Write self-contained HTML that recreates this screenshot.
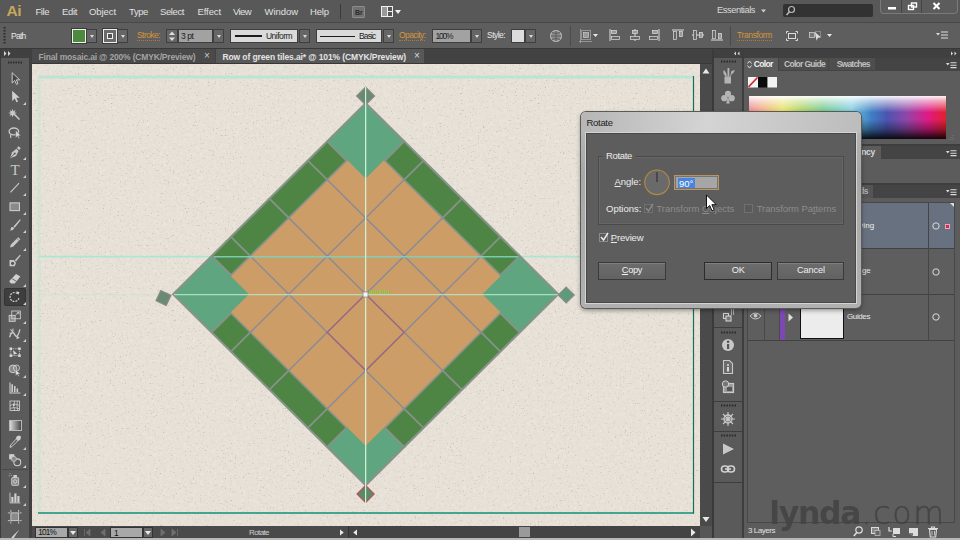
<!DOCTYPE html>
<html><head><meta charset="utf-8"><title>Row of green tiles.ai</title>
<style>
*{box-sizing:border-box;margin:0;padding:0}
html,body{width:960px;height:540px;overflow:hidden;background:#5b5b5b;font-family:"Liberation Sans",sans-serif;font-size:9px;color:#e0e0e0}
.a{position:absolute}
.t{position:absolute;white-space:nowrap;line-height:1}
.m{top:6px;font-size:10.5px;color:#dedede}
.or{color:#d4963a;border-bottom:1px dotted #b07a30}
.dd{position:absolute;top:29px;height:14px;width:11px;background:#666;border:1px solid #3e3e3e}
.dd:after{content:"";position:absolute;left:2px;top:5px;border:2.5px solid transparent;border-top:3.5px solid #d8d8d8;border-bottom:0;margin-left:.5px}
.btn{position:absolute;height:18px;background:linear-gradient(#6c6c6c,#626262);border:1px solid #3a3a3a;box-shadow:inset 0 1px 0 #808080;color:#f0f0f0;font-size:10px;text-align:center;line-height:16px}
</style></head><body>
<div class="a" style="left:0px;top:0px;width:960px;height:22px;background:#585858;"></div>
<div class="a" style="left:0px;top:22px;width:960px;height:1px;background:#484848;"></div>
<div class="t " style="left:6.5px;top:2.5px;font-size:15.5px;color:#c6a75c;font-weight:bold;letter-spacing:-0.5px;">Ai</div>
<div class="t " style="left:35.5px;top:6.5px;font-size:9.5px;color:#e0e0e0;;letter-spacing:-0.45px">File</div>
<div class="t " style="left:62px;top:6.5px;font-size:9.5px;color:#e0e0e0;;letter-spacing:-0.34px">Edit</div>
<div class="t " style="left:89px;top:6.5px;font-size:9.5px;color:#e0e0e0;;letter-spacing:-0.08px">Object</div>
<div class="t " style="left:129px;top:6.5px;font-size:9.5px;color:#e0e0e0;;letter-spacing:-0.40px">Type</div>
<div class="t " style="left:160px;top:6.5px;font-size:9.5px;color:#e0e0e0;;letter-spacing:-0.40px">Select</div>
<div class="t " style="left:197.5px;top:6.5px;font-size:9.5px;color:#e0e0e0;;letter-spacing:-0.10px">Effect</div>
<div class="t " style="left:233px;top:6.5px;font-size:9.5px;color:#e0e0e0;;letter-spacing:-0.61px">View</div>
<div class="t " style="left:264.5px;top:6.5px;font-size:9.5px;color:#e0e0e0;;letter-spacing:-0.05px">Window</div>
<div class="t " style="left:310px;top:6.5px;font-size:9.5px;color:#e0e0e0;;letter-spacing:-0.14px">Help</div>
<div class="a" style="left:340px;top:4px;width:1px;height:15px;background:#3a3a3a;"></div>
<div class="a" style="left:352px;top:6px;width:13px;height:12px;background:#707070;border:1px solid #8c8c8c;border-radius:1px"><div class="t" style="left:2px;top:2px;font-size:7px;color:#2a2a2a;font-weight:bold">Br</div></div>
<svg class="a" style="left:381px;top:6px" width="22" height="12"><rect x="0.5" y="0.5" width="11" height="10" fill="#555" stroke="#f0f0f0"/><path d="M6.5 0.5v10M6.5 5.5h5" stroke="#f0f0f0" fill="none"/><rect x="1" y="1" width="5" height="9" fill="#999"/><path d="M14 4h6l-3 4z" fill="#f0f0f0"/></svg>
<div class="t " style="left:717px;top:6px;font-size:9.3px;color:#d8d8d8;;letter-spacing:-0.44px">Essentials</div>
<svg class="a" style="left:761px;top:9px" width="6" height="5"><path d="M0 0.5h5l-2.5 3z" fill="#d0d0d0"/></svg>
<div class="a" style="left:783px;top:4px;width:90px;height:13px;background:#323232;border-radius:2px"></div>
<svg class="a" style="left:785px;top:5px" width="12" height="12"><circle cx="6.5" cy="4.5" r="3" fill="none" stroke="#bbb" stroke-width="1.2"/><path d="M4.5 6.8L1.5 10" stroke="#bbb" stroke-width="1.6"/></svg>
<div class="a" style="left:880px;top:0px;width:78px;height:14px;background:#5c5c5c;border:1px solid #7a7a7a;border-top:0;border-radius:0 0 4px 4px"></div>
<div class="a" style="left:901px;top:0px;width:1px;height:13px;background:#444;"></div>
<div class="a" style="left:921px;top:0px;width:1px;height:13px;background:#444;"></div>
<svg class="a" style="left:880px;top:0" width="78" height="14"><rect x="8" y="7" width="8" height="2.5" fill="#fff"/><rect x="28.5" y="5.500" width="5" height="4" fill="none" stroke="#fff" stroke-width="1.4"/><rect x="31.5" y="3" width="5" height="4" fill="none" stroke="#fff" stroke-width="1.4"/><path d="M53.500 3l6 6M59.500 3l-6 6" stroke="#fff" stroke-width="2"/></svg>
<div class="a" style="left:0px;top:23px;width:960px;height:25px;background:#5e5e5e;"></div>
<div class="a" style="left:0px;top:48px;width:960px;height:1px;background:#383838;"></div>
<svg class="a" style="left:3px;top:27px" width="4" height="18"><path d="M1.5 0v18" stroke="#2a2a2a" stroke-width="2" stroke-dasharray="1.5 1.5"/></svg>
<div class="t " style="left:11px;top:32px;font-size:8.5px;color:#e8e8e8;;letter-spacing:-0.75px">Path</div>
<div class="a" style="left:72px;top:29px;width:14px;height:14px;background:#4d8a3e;border:1px solid #f0f0f0;outline:1px solid #3a3a3a"></div>
<div class="dd" style="left:86px"></div><div class="a" style="left:103px;top:29px;width:14px;height:14px;background:#6a6a6a;border:1px solid #f0f0f0;outline:1px solid #3a3a3a"><div class="a" style="left:3px;top:3px;width:6px;height:6px;border:1.5px solid #f0f0f0;background:#555"></div></div>
<div class="dd" style="left:117px"></div><div class="t or" style="left:137px;top:31px;font-size:8.5px;color:#d4963a;;letter-spacing:-0.56px">Stroke:</div>
<div class="a" style="left:166px;top:29px;width:12px;height:14px;background:#666;border:1px solid #3e3e3e"></div>
<svg class="a" style="left:166px;top:29px" width="12" height="14"><path d="M3 6l3-3.500 3 3.500zM3 8.500l3 3.500 3-3.500z" fill="#ddd"/></svg>
<div class="a" style="left:178px;top:29px;width:35px;height:14px;background:#a2a2a2;border:1px solid #3e3e3e"></div>
<div class="t " style="left:181px;top:32px;font-size:8.5px;color:#1e1e1e;;letter-spacing:-0.42px">3 pt</div>
<div class="dd" style="left:213px"></div><div class="a" style="left:230px;top:29px;width:68px;height:14px;background:#dadada;border:1px solid #3e3e3e"><div class="a" style="left:3.500px;top:5px;width:27px;height:2px;background:#1a1a1a"></div></div>
<div class="t " style="left:266px;top:32px;font-size:8.5px;color:#1e1e1e;;letter-spacing:-0.54px">Uniform</div>
<div class="dd" style="left:299px"></div><div class="a" style="left:316px;top:29px;width:66px;height:14px;background:#dadada;border:1px solid #3e3e3e"><div class="a" style="left:3px;top:5.500px;width:35px;height:1.5px;background:#1a1a1a"></div></div>
<div class="t " style="left:359px;top:32px;font-size:8.5px;color:#1e1e1e;;letter-spacing:-0.86px">Basic</div>
<div class="dd" style="left:383px"></div><div class="t or" style="left:399px;top:31px;font-size:8.5px;color:#d4963a;;letter-spacing:-0.59px">Opacity:</div>
<div class="a" style="left:432px;top:29px;width:39px;height:14px;background:#a2a2a2;border:1px solid #3e3e3e"></div>
<div class="t " style="left:435.4px;top:32px;font-size:8.5px;color:#1e1e1e;;letter-spacing:-1.19px">100%</div>
<div class="dd" style="left:471px"></div><div class="t " style="left:487px;top:31px;font-size:8.5px;color:#e8e8e8;;letter-spacing:-0.54px">Style:</div>
<div class="a" style="left:511px;top:29px;width:14px;height:14px;background:#dcdcdc;border:1px solid #3e3e3e"></div>
<div class="dd" style="left:525px"></div><svg class="a" style="left:549px;top:29px" width="14" height="14"><circle cx="7" cy="7" r="5.500" fill="#8a8a8a" stroke="#c8c8c8"/><path d="M7 1.500v11M1.500 7h11M3 3.500q4 2 8 0M3 10.500q4-2 8 0" stroke="#555" fill="none" stroke-width=".8"/></svg>
<div class="a" style="left:570px;top:26px;width:1px;height:20px;background:#4c4c4c;"></div>
<svg class="a" style="left:579px;top:29px" width="20" height="14"><rect x="2.500" y="1.500" width="9" height="9" fill="none" stroke="#ccc" stroke-dasharray="1 1"/><rect x="4.500" y="3.500" width="5" height="5" fill="#999" stroke="#ddd" stroke-width=".6"/><path d="M0 12.500h13M1.500 0v14" stroke="#bbb" stroke-width=".6"/><path d="M14 5h5l-2.500 3z" fill="#e8e8e8"/></svg>
<svg class="a" style="left:609px;top:29px" width="12" height="12"><path d="M1 0v12" stroke="#ddd"/><rect x="2.500" y="1.500" width="5" height="3" fill="#999" stroke="#ddd" stroke-width=".7"/><rect x="2.500" y="7.500" width="8" height="3" fill="#666" stroke="#ddd" stroke-width=".7"/></svg>
<svg class="a" style="left:629px;top:29px" width="12" height="12"><path d="M6 0v12" stroke="#ddd"/><rect x="3.500" y="1.500" width="5" height="3" fill="#999" stroke="#ddd" stroke-width=".7"/><rect x="1.500" y="7.500" width="9" height="3" fill="#666" stroke="#ddd" stroke-width=".7"/></svg>
<svg class="a" style="left:648px;top:29px" width="12" height="12"><path d="M11 0v12" stroke="#ddd"/><rect x="4.500" y="1.500" width="5" height="3" fill="#999" stroke="#ddd" stroke-width=".7"/><rect x="1.500" y="7.500" width="8" height="3" fill="#666" stroke="#ddd" stroke-width=".7"/></svg>
<svg class="a" style="left:672px;top:29px" width="12" height="12"><path d="M0 1h12" stroke="#ddd"/><rect x="1.500" y="2.500" width="3" height="8" fill="#666" stroke="#ddd" stroke-width=".7"/><rect x="7.500" y="2.500" width="3" height="5" fill="#999" stroke="#ddd" stroke-width=".7"/></svg>
<svg class="a" style="left:692px;top:29px" width="12" height="12"><path d="M0 6h12" stroke="#ddd"/><rect x="1.500" y="1.500" width="3" height="9" fill="#666" stroke="#ddd" stroke-width=".7"/><rect x="7.500" y="3.500" width="3" height="5" fill="#999" stroke="#ddd" stroke-width=".7"/></svg>
<svg class="a" style="left:711px;top:29px" width="12" height="12"><path d="M0 11h12" stroke="#ddd"/><rect x="1.500" y="1.500" width="3" height="8" fill="#666" stroke="#ddd" stroke-width=".7"/><rect x="7.500" y="4.500" width="3" height="5" fill="#999" stroke="#ddd" stroke-width=".7"/></svg>
<div class="a" style="left:730px;top:26px;width:1px;height:20px;background:#4a4a4a;"></div>
<div class="t or" style="left:737px;top:31px;font-size:8.5px;color:#d4963a;;letter-spacing:-0.38px">Transform</div>
<svg class="a" style="left:786px;top:30px" width="12" height="12"><rect x="2.500" y="3.500" width="7" height="5" fill="none" stroke="#ddd"/><path d="M0.500 3.500v-2h2M11.500 3.500v-2h-2M0.500 8.500v2h2M11.500 8.500v2h-2" stroke="#ddd" fill="none"/></svg>
<svg class="a" style="left:808px;top:29px" width="26" height="14"><rect x="1.500" y="3.500" width="5" height="5" fill="#777" stroke="#ccc" stroke-width=".8"/><rect x="7.500" y="2.500" width="5" height="5" fill="none" stroke="#ccc" stroke-dasharray="1 1" stroke-width=".8"/><path d="M7 3l6 5.500-3 .2-1.500 3z" fill="#ddd"/><path d="M19 5h5l-2.500 3z" fill="#e8e8e8"/></svg>
<svg class="a" style="left:936px;top:31px" width="14" height="9"><path d="M0 2h4l-2 2.500z" fill="#ddd"/><path d="M5 1h7M5 4h7M5 7h7" stroke="#ddd" stroke-width="1.2"/></svg>
<div class="a" style="left:0px;top:49px;width:30px;height:9px;background:#404040;"></div>
<svg class="a" style="left:4px;top:51px" width="8" height="5"><path d="M0 0l2.500 2.500-2.500 2.500zM4 0l2.500 2.500-2.500 2.500z" fill="#d8d8d8"/></svg>
<div class="a" style="left:29px;top:49px;width:3px;height:491px;background:#404040;"></div>
<div class="a" style="left:32px;top:49px;width:680px;height:15px;background:#424242;"></div>
<div class="a" style="left:32px;top:49px;width:183px;height:14px;background:#4a4a4a;"></div>
<div class="t " style="left:38.5px;top:52.6px;font-size:8.5px;color:#a4a4a4;font-weight:bold;letter-spacing:-0.17px">Final mosaic.ai @ 200% (CMYK/Preview)</div>
<div class="t " style="left:204px;top:51px;font-size:10px;color:#c8c8c8;;">×</div>
<div class="a" style="left:216px;top:49px;width:208px;height:15px;background:#585858;"></div>
<div class="t " style="left:222.5px;top:52.6px;font-size:8.5px;color:#e4e4e4;font-weight:bold;letter-spacing:-0.11px">Row of green tiles.ai* @ 101% (CMYK/Preview)</div>
<div class="t " style="left:414px;top:51px;font-size:10px;color:#d8d8d8;;">×</div>
<div class="a" style="left:32px;top:63px;width:680px;height:1px;background:#383838;"></div>
<div class="a" style="left:0px;top:58px;width:29px;height:482px;background:#5b5b5b;"></div>
<div class="a" style="left:0px;top:49px;width:1px;height:491px;background:#3c3c3c;"></div>
<svg class="a" style="left:8px;top:60.500px" width="14" height="3"><path d="M0 1.500h14" stroke="#2e2e2e" stroke-width="2" stroke-dasharray="1.500 1"/></svg>
<div class="a" style="left:4px;top:288px;width:22px;height:17.5px;background:#3e3e3e;border:1px solid #343434;border-radius:2px"></div>
<div class="a" style="left:2px;top:469px;width:26px;height:1px;background:#4a4a4a;"></div>
<svg class="a" style="left:7.3px;top:71.3px" width="15.5" height="15.5" viewBox="0 0 18 18"><path d="M6 2v12l3-3 2 4.500 1.800-.8-2-4.400h4z" fill="#444" stroke="#d0d0d0" stroke-width="1.100"/></svg>
<svg class="a" style="left:7.3px;top:89.3px" width="15.5" height="15.5" viewBox="0 0 18 18"><path d="M6 2v12l3-3 2 4.500 1.800-.8-2-4.400h4z" fill="#d0d0d0"/></svg>
<svg class="a" style="left:23px;top:102px" width="3" height="3"><path d="M3 0v3h-3z" fill="#d0d0d0"/></svg>
<svg class="a" style="left:7.3px;top:107.3px" width="15.5" height="15.5" viewBox="0 0 18 18"><path d="M8.500 8.500l6 6" stroke="#c8c8c8" stroke-width="1.800"/><path d="M6.500 2l.9 2.800 2.600-1.400-1.300 2.600 2.800 1-2.800.9 1.300 2.600-2.600-1.300-.9 2.800-1-2.800-2.600 1.300 1.400-2.600-2.800-.9 2.800-1-1.400-2.600 2.600 1.400z" fill="#c8c8c8"/></svg>
<svg class="a" style="left:7.3px;top:125.3px" width="15.5" height="15.5" viewBox="0 0 18 18"><ellipse cx="8" cy="7.500" rx="5.500" ry="4" fill="none" stroke="#c8c8c8" stroke-width="1.600"/><path d="M5 11q-2 2 0 4" fill="none" stroke="#c8c8c8" stroke-width="1.200"/><path d="M10 6v9l2.200-2 1.300 3 1.200-.5-1.300-3h2.800z" fill="#d8d8d8" stroke="#535353" stroke-width=".5"/></svg>
<svg class="a" style="left:7.3px;top:144.3px" width="15.5" height="15.5" viewBox="0 0 18 18"><path d="M13.500 2.500l2.500 2.500-2 2-2.500-2.500z" fill="#c8c8c8"/><path d="M11 5.500l2.500 2.500-3 6-7 2.500 2.500-7z" fill="#c8c8c8"/><path d="M4 16l4.500-4.500" stroke="#535353" stroke-width="1"/><circle cx="9" cy="11" r="1.100" fill="#535353"/></svg>
<svg class="a" style="left:23px;top:157px" width="3" height="3"><path d="M3 0v3h-3z" fill="#d0d0d0"/></svg>
<div class="t" style="left:10.500px;top:163px;font-size:15px;color:#c8c8c8;font-family:'Liberation Serif',serif">T</div>
<svg class="a" style="left:23px;top:175px" width="3" height="3"><path d="M3 0v3h-3z" fill="#d0d0d0"/></svg>
<svg class="a" style="left:7.3px;top:180.3px" width="15.5" height="15.5" viewBox="0 0 18 18"><path d="M4 14.500l10-11" stroke="#c8c8c8" stroke-width="1.300"/></svg>
<svg class="a" style="left:23px;top:193px" width="3" height="3"><path d="M3 0v3h-3z" fill="#d0d0d0"/></svg>
<svg class="a" style="left:7.3px;top:199.3px" width="15.5" height="15.5" viewBox="0 0 18 18"><rect x="3.500" y="4.500" width="11" height="9" fill="#8a8a8a" stroke="#d0d0d0" stroke-width="1.200"/></svg>
<svg class="a" style="left:23px;top:212px" width="3" height="3"><path d="M3 0v3h-3z" fill="#d0d0d0"/></svg>
<svg class="a" style="left:7.3px;top:217.3px" width="15.5" height="15.5" viewBox="0 0 18 18"><path d="M15 2.500l-7.500 8.500 1.500 1.500 7-9z" fill="#c8c8c8"/><path d="M7 11.500l1.500 1.500q-1.500 3-5.500 2.500 2-1 1.500-2.500t2.500-1.500z" fill="#c8c8c8"/></svg>
<svg class="a" style="left:23px;top:230px" width="3" height="3"><path d="M3 0v3h-3z" fill="#d0d0d0"/></svg>
<svg class="a" style="left:7.3px;top:235.3px" width="15.5" height="15.5" viewBox="0 0 18 18"><path d="M13 2.500l2.500 2.500-8.500 8.500-3.500 1 1-3.500z" fill="#c8c8c8"/><path d="M11.500 4l2.500 2.500" stroke="#535353" stroke-width=".8"/></svg>
<svg class="a" style="left:23px;top:248px" width="3" height="3"><path d="M3 0v3h-3z" fill="#d0d0d0"/></svg>
<svg class="a" style="left:7.3px;top:253.3px" width="15.5" height="15.5" viewBox="0 0 18 18"><path d="M15 2l-6 6.500 1.500 1.500 5.500-7z" fill="#c8c8c8"/><path d="M3 8h5l2.500 3.500-1.500 4h-6z" fill="#c8c8c8"/><circle cx="6.500" cy="12" r="1.800" fill="#535353"/></svg>
<svg class="a" style="left:7.3px;top:271.3px" width="15.5" height="15.5" viewBox="0 0 18 18"><path d="M10.500 3.500l5 3-6.500 8h-4.500l-2-2.500z" fill="#d0d0d0"/><path d="M6 9l5 3" stroke="#535353" stroke-width="1"/></svg>
<svg class="a" style="left:23px;top:284px" width="3" height="3"><path d="M3 0v3h-3z" fill="#d0d0d0"/></svg>
<svg class="a" style="left:7.3px;top:289.3px" width="15.5" height="15.5" viewBox="0 0 18 18"><path d="M13.800 10.500a5.200 5.200 0 1 1-1.500-5" fill="none" stroke="#d8d8d8" stroke-width="1.300" stroke-dasharray="2.200 1.200"/><path d="M10.500 3l4 .5-1.500 3.500z" fill="#d8d8d8"/></svg>
<svg class="a" style="left:23px;top:302px" width="3" height="3"><path d="M3 0v3h-3z" fill="#d0d0d0"/></svg>
<svg class="a" style="left:7.3px;top:308.3px" width="15.5" height="15.5" viewBox="0 0 18 18"><rect x="2.500" y="8.500" width="7" height="7" fill="#8a8a8a" stroke="#d0d0d0"/><rect x="5.500" y="3.500" width="10" height="9" fill="none" stroke="#d0d0d0"/><path d="M10 8l4-3M14 5h-2.500M14 5v2.500" stroke="#d0d0d0" fill="none"/></svg>
<svg class="a" style="left:23px;top:321px" width="3" height="3"><path d="M3 0v3h-3z" fill="#d0d0d0"/></svg>
<svg class="a" style="left:7.3px;top:326.3px" width="15.5" height="15.5" viewBox="0 0 18 18"><path d="M3 13q3-9 6-3t6-6" fill="none" stroke="#c8c8c8" stroke-width="1.600"/><path d="M4 4l3 3M3 8.500h3M7 3v3" stroke="#c8c8c8" stroke-width="1.200"/><path d="M11 11l4 2.500-4 2z" fill="#c8c8c8"/></svg>
<svg class="a" style="left:23px;top:339px" width="3" height="3"><path d="M3 0v3h-3z" fill="#d0d0d0"/></svg>
<svg class="a" style="left:7.3px;top:344.3px" width="15.5" height="15.5" viewBox="0 0 18 18"><rect x="4.500" y="5.500" width="10" height="8" fill="none" stroke="#c8c8c8" stroke-dasharray="1.500 1"/><rect x="3" y="4" width="3" height="3" fill="#d8d8d8"/><rect x="13" y="4" width="3" height="3" fill="#d8d8d8"/><rect x="3" y="12" width="3" height="3" fill="#d8d8d8"/><rect x="13" y="12" width="3" height="3" fill="#d8d8d8"/><path d="M7 7l5 4.500h-3l-1 2z" fill="#d8d8d8"/></svg>
<svg class="a" style="left:7.3px;top:362.3px" width="15.5" height="15.5" viewBox="0 0 18 18"><circle cx="7" cy="8" r="4.500" fill="#8a8a8a" stroke="#d0d0d0" stroke-width="1.100"/><circle cx="11" cy="7" r="3.500" fill="none" stroke="#d0d0d0" stroke-width="1.100"/><path d="M10 9v7l2-1.800 1.200 2.500 1-.5-1.200-2.400h2.500z" fill="#e0e0e0" stroke="#535353" stroke-width=".4"/></svg>
<svg class="a" style="left:23px;top:375px" width="3" height="3"><path d="M3 0v3h-3z" fill="#d0d0d0"/></svg>
<svg class="a" style="left:7.3px;top:380.3px" width="15.5" height="15.5" viewBox="0 0 18 18"><path d="M3.500 3v12h12" fill="none" stroke="#d0d0d0" stroke-width="1.200"/><path d="M6 14v-9M9 14v-7M12 14v-4" stroke="#d0d0d0" stroke-width="1.800"/></svg>
<svg class="a" style="left:23px;top:393px" width="3" height="3"><path d="M3 0v3h-3z" fill="#d0d0d0"/></svg>
<svg class="a" style="left:7.3px;top:398.3px" width="15.5" height="15.5" viewBox="0 0 18 18"><rect x="3.500" y="3.500" width="11" height="11" fill="none" stroke="#d0d0d0"/><path d="M3.500 9q5.500-4 11 0M9 3.500q-3 5.500 0 11M3.500 12q5-2 11 .5M12 3.500q-1 6 .5 11" fill="none" stroke="#d0d0d0" stroke-width=".9"/><circle cx="8" cy="8" r="1.300" fill="#d0d0d0"/></svg>
<div class="a" style="left:8.500px;top:420px;width:13px;height:11px;border:1px solid #b8b8b8;background:linear-gradient(90deg,#d8d8d8,#4a4a4a)"></div>
<svg class="a" style="left:7.3px;top:434.3px" width="15.5" height="15.5" viewBox="0 0 18 18"><path d="M12 2.500q2-1.500 3.500 0t0 3.500l-2 2-3.500-3.500z" fill="#d0d0d0"/><path d="M10.500 6l2 2-6.500 6.500-2.500 1 .8-2.700z" fill="none" stroke="#d0d0d0" stroke-width="1.100"/></svg>
<svg class="a" style="left:23px;top:447px" width="3" height="3"><path d="M3 0v3h-3z" fill="#d0d0d0"/></svg>
<svg class="a" style="left:7.3px;top:452.3px" width="15.5" height="15.5" viewBox="0 0 18 18"><rect x="2.500" y="2.500" width="6" height="6" fill="#d0d0d0"/><circle cx="12" cy="12" r="4" fill="none" stroke="#d0d0d0" stroke-width="1.200"/><circle cx="8" cy="8" r="3" fill="#8a8a8a" stroke="#d0d0d0" stroke-width=".8"/></svg>
<svg class="a" style="left:23px;top:465px" width="3" height="3"><path d="M3 0v3h-3z" fill="#d0d0d0"/></svg>
<svg class="a" style="left:7.3px;top:472.3px" width="15.5" height="15.5" viewBox="0 0 18 18"><rect x="5.500" y="6.500" width="8" height="9" rx="1" fill="#8a8a8a" stroke="#d0d0d0" stroke-width="1.100"/><rect x="7.500" y="3.500" width="4" height="3" fill="#d0d0d0"/><circle cx="9.500" cy="11" r="2" fill="none" stroke="#d8d8d8"/><path d="M3 2h1M2 4.500h1M4.500 4h1" stroke="#d0d0d0"/></svg>
<svg class="a" style="left:23px;top:485px" width="3" height="3"><path d="M3 0v3h-3z" fill="#d0d0d0"/></svg>
<svg class="a" style="left:7.3px;top:490.3px" width="15.5" height="15.5" viewBox="0 0 18 18"><path d="M3.500 3v12h12" fill="none" stroke="#d0d0d0" stroke-width="1"/><rect x="5" y="8" width="2.500" height="6.500" fill="#d0d0d0"/><rect x="8.500" y="4" width="2.500" height="10.500" fill="#d0d0d0"/><rect x="12" y="7" width="2.500" height="7.500" fill="#d0d0d0"/></svg>
<svg class="a" style="left:23px;top:503px" width="3" height="3"><path d="M3 0v3h-3z" fill="#d0d0d0"/></svg>
<svg class="a" style="left:7.3px;top:509.3px" width="15.5" height="15.5" viewBox="0 0 18 18"><rect x="4.500" y="4.500" width="9" height="9" fill="#8a8a8a" stroke="#d0d0d0" stroke-width="1"/><path d="M1 4.500h2.500M14.500 4.500h2.500M1 13.500h2.500M14.500 13.500h2.500M4.500 1v2.500M13.500 1v2.500M4.500 14.500v2.500M13.500 14.500v2.500" stroke="#d0d0d0"/></svg>
<svg class="a" style="left:7.3px;top:528.3px" width="15.5" height="15.5" viewBox="0 0 18 18"><path d="M14 2l-9 9 2 2zM4 12l-1.500 3.500 3.500-1.500z" fill="#d0d0d0"/></svg>
<svg class="a" style="left:32px;top:64px" width="668" height="462" viewBox="32 64 668 462"><defs><filter id="nzd" x="0" y="0" width="100%" height="100%" color-interpolation-filters="sRGB"><feTurbulence type="fractalNoise" baseFrequency="0.6" numOctaves="2" seed="3"/><feColorMatrix type="matrix" values="0 0 0 0 0.70  0 0 0 0 0.66  0 0 0 0 0.58  0 2.6 0 0 -1.66"/></filter><filter id="nzl" x="0" y="0" width="100%" height="100%" color-interpolation-filters="sRGB"><feTurbulence type="fractalNoise" baseFrequency="0.3" numOctaves="2" seed="8"/><feColorMatrix type="matrix" values="0 0 0 0 0.96  0 0 0 0 0.945  0 0 0 0 0.915  1.1 0 0 0 -0.52"/></filter></defs><rect x="32" y="64" width="668" height="462" fill="#e6e0d6"/><rect x="32" y="64" width="668" height="462" filter="url(#nzd)"/><rect x="32" y="64" width="668" height="462" filter="url(#nzl)"/><path d="M39 77H694" stroke="#b2e6d4" stroke-width="3" opacity=".8"/><path d="M39 256.700H694" stroke="#a4e8d0" stroke-width="1.800" opacity=".85"/><path d="M39 76V513" stroke="#b4e8d2" stroke-width="3" opacity=".38"/><path d="M39 294.600H694" stroke="#aee6d0" stroke-width="1.200" opacity=".28"/><path d="M38 513H694" stroke="#0e9078" stroke-width="1.300" fill="none"/><path d="M693.500 76V513.500" stroke="#14705a" stroke-width="1.200" fill="none"/><g transform="translate(365.7 294.2) scale(1 0.992) rotate(45)"><rect x="-137.2" y="-137.2" width="274.4" height="274.4" fill="#88928a"/><rect x="82.50" y="82.50" width="52.60" height="52.60" fill="#5fa680"/><rect x="-108.00" y="-108.00" width="216.00" height="216.00" fill="#cd9d67"/><rect x="-80.70" y="-135.10" width="25.40" height="25.40" fill="#4e8544"/><rect x="-80.70" y="109.70" width="25.40" height="25.40" fill="#4e8544"/><rect y="-80.70" x="-135.10" height="25.40" width="25.40" fill="#4e8544"/><rect y="-80.70" x="109.70" height="25.40" width="25.40" fill="#4e8544"/><rect x="-53.50" y="-135.10" width="52.60" height="25.40" fill="#4e8544"/><rect x="-53.50" y="109.70" width="52.60" height="25.40" fill="#4e8544"/><rect y="-53.50" x="-135.10" height="52.60" width="25.40" fill="#4e8544"/><rect y="-53.50" x="109.70" height="52.60" width="25.40" fill="#4e8544"/><rect x="0.90" y="-135.10" width="52.60" height="25.40" fill="#4e8544"/><rect x="0.90" y="109.70" width="52.60" height="25.40" fill="#4e8544"/><rect y="0.90" x="-135.10" height="52.60" width="25.40" fill="#4e8544"/><rect y="0.90" x="109.70" height="52.60" width="25.40" fill="#4e8544"/><rect x="55.30" y="-135.10" width="25.40" height="25.40" fill="#4e8544"/><rect x="55.30" y="109.70" width="25.40" height="25.40" fill="#4e8544"/><rect y="55.30" x="-135.10" height="25.40" width="25.40" fill="#4e8544"/><rect y="55.30" x="109.70" height="25.40" width="25.40" fill="#4e8544"/><path d="M-54.40 -108.80V108.80M-108.80 -54.40H108.80" stroke="#7f88a0" stroke-width="1.500" opacity=".85"/><path d="M0.00 -108.80V108.80M-108.80 0.00H108.80" stroke="#7f88a0" stroke-width="1.500" opacity=".85"/><path d="M54.40 -108.80V108.80M-108.80 54.40H108.80" stroke="#7f88a0" stroke-width="1.500" opacity=".85"/><rect x="0" y="0" width="54.40" height="54.40" fill="none" stroke="#a55e78" stroke-width="1.300" opacity=".85"/><rect x="-135.10" y="-135.10" width="52.60" height="52.60" fill="#5fa680"/><rect x="82.50" y="-135.10" width="52.60" height="52.60" fill="#5fa680"/><rect x="-135.10" y="82.50" width="52.60" height="52.60" fill="#5fa680"/></g><path d="M365.600 104V484" stroke="#c8ecd4" stroke-width="1.200" opacity=".6"/><path d="M174 294.600H558" stroke="#b4e4c4" stroke-width="1.200" opacity=".9"/><path d="M214 256.700H518" stroke="#7cd4bc" stroke-width="1.500" opacity=".9"/><rect x="-6.36" y="-6.36" width="12.73" height="12.73" transform="translate(365.6 96) rotate(45)" fill="#6a8a76" stroke="#8c8c86" stroke-width="1.200"/><rect x="-5.66" y="-5.66" width="11.31" height="11.31" transform="translate(163.5 298) rotate(25)" fill="#6a8a76" stroke="#8c8c86" stroke-width="1.200"/><rect x="-5.66" y="-5.66" width="11.31" height="11.31" transform="translate(566.2 295) rotate(45)" fill="#5f9a7c" stroke="#8c8c86" stroke-width="1.200"/><rect x="-6" y="-6" width="12" height="12" transform="translate(365.600 494) rotate(45)" fill="#5a8a66" stroke="#b05a60" stroke-width="1.300"/><path d="M365.600 87V505" stroke="#ccf0d8" stroke-width="1.200"/><rect x="363" y="292" width="5" height="5" fill="#f4f4f4" stroke="#8a8a8a" stroke-width=".8"/><text x="369" y="293.500" font-family="Liberation Sans, sans-serif" font-size="7" fill="#78d840" textLength="21">anchor</text></svg>
<div class="a" style="left:700px;top:64px;width:12px;height:462px;background:#4a4a4a;"></div>
<svg class="a" style="left:700px;top:64px" width="12" height="462"><path d="M2.500 9.500h7l-3.500-5zM2.500 453h7l-3.500 5z" fill="#e8e8e8"/></svg>
<div class="a" style="left:712px;top:49px;width:2px;height:491px;background:#3a3a3a;"></div>
<div class="a" style="left:32px;top:526px;width:680px;height:12px;background:#4a4a4a;"></div>
<div class="a" style="left:700px;top:526px;width:12px;height:12px;background:#565656;"></div>
<div class="a" style="left:0px;top:538px;width:960px;height:2px;background:#b8b8b8;"></div>
<div class="a" style="left:35px;top:527px;width:33px;height:11px;background:#a8a8a8;border:1px solid #333"></div>
<div class="t " style="left:38.2px;top:529px;font-size:8.2px;color:#111;;letter-spacing:-0.79px">101%</div>
<div class="a" style="left:68px;top:527px;width:10px;height:11px;background:#666;border:1px solid #333"></div>
<svg class="a" style="left:68px;top:527px" width="10" height="11"><path d="M2 4h6l-3 4z" fill="#e8e8e8"/></svg>
<svg class="a" style="left:84px;top:528px" width="24" height="9"><path d="M0.500 1v7M6 1v7l-4-3.500zM21 1v7l-4-3.500z" fill="#6e6e6e" stroke="#6e6e6e" stroke-width=".8"/></svg>
<div class="a" style="left:110px;top:527px;width:33px;height:11px;background:#a8a8a8;border:1px solid #333"><div class="t" style="left:3px;top:1px;font-size:8.500px;color:#111">1</div></div>
<div class="a" style="left:143px;top:527px;width:10px;height:11px;background:#666;border:1px solid #333"></div>
<svg class="a" style="left:143px;top:527px" width="10" height="11"><path d="M2 4h6l-3 4z" fill="#e8e8e8"/></svg>
<svg class="a" style="left:159px;top:528px" width="24" height="9"><path d="M2 1v7l4-3.500zM13 1v7l4-3.500zM18.500 1v7" fill="#6e6e6e" stroke="#6e6e6e" stroke-width=".8"/></svg>
<div class="t " style="left:249px;top:529px;font-size:8px;color:#d0d0d0;;letter-spacing:-0.60px">Rotate</div>
<div class="a" style="left:348px;top:526px;width:1px;height:12px;background:#333;"></div>
<div class="a" style="left:349px;top:526px;width:351px;height:12px;background:#444444;"></div>
<svg class="a" style="left:338px;top:528px" width="30" height="9"><path d="M2 1.500v6l3.800-3zM19 1.500v6l-3.800-3z" fill="#e8e8e8"/></svg>
<div class="a" style="left:519px;top:527px;width:11px;height:10px;background:#9a9a9a;"></div>
<svg class="a" style="left:689px;top:528px" width="8" height="9"><path d="M2 0.500v8l4.500-4z" fill="#e8e8e8"/></svg>
<div class="a" style="left:714px;top:49px;width:246px;height:9px;background:#404040;"></div>
<div class="a" style="left:714px;top:58px;width:28px;height:424px;background:#5a5a5a;"></div>
<div class="a" style="left:714px;top:483px;width:28px;height:55px;background:#5a5a5a;"></div>
<div class="a" style="left:714px;top:482px;width:28px;height:1px;background:#3e3e3e;"></div>
<div class="a" style="left:742px;top:49px;width:2px;height:489px;background:#3e3e3e;"></div>
<svg class="a" style="left:733px;top:51px" width="8" height="5"><path d="M3 0.500l-2 2 2 2zM6.500 0.500l-2 2 2 2z" fill="#d8d8d8"/></svg>
<svg class="a" style="left:950.500px;top:51px" width="8" height="5"><path d="M0 0.500l2 2-2 2zM3.500 0.500l2 2-2 2z" fill="#d8d8d8"/></svg>
<svg class="a" style="left:721px;top:60px" width="15" height="3"><path d="M0 1.500h15" stroke="#2a2a2a" stroke-width="2" stroke-dasharray="1.500 1.200"/></svg>
<svg class="a" style="left:719.0px;top:67.0px" width="18" height="18" viewBox="0 0 18 18"><path d="M5.500 9.500h6.500v7h-6.500z" fill="#b4b4b4"/><path d="M6.500 9.500q-3.500-4 -1.500-6.500q2.500 2.500 3 6.500zM8.500 9.500v-8.500h1.800v8.500zM11 9.500l1.500-5.500 3.500-1-2 3.500-1.500 .5-.5 2.500z" fill="#b4b4b4"/></svg>
<svg class="a" style="left:719.0px;top:87.5px" width="18" height="18" viewBox="0 0 18 18"><circle cx="9" cy="5.800" r="3.100" fill="#b4b4b4"/><circle cx="5.300" cy="10.200" r="3.100" fill="#b4b4b4"/><circle cx="12.700" cy="10.200" r="3.100" fill="#b4b4b4"/><path d="M9 8l1.800 7.500h-3.600z" fill="#b4b4b4"/></svg>
<svg class="a" style="left:719.0px;top:305.0px" width="18" height="18" viewBox="0 0 18 18"><rect x="4.500" y="8.500" width="5" height="5" fill="none" stroke="#d0d0d0" stroke-width="1.100"/><rect x="7" y="11" width="5" height="5" fill="#777" stroke="#d0d0d0" stroke-width="1.100"/><path d="M12.500 3v7M14.500 2v8" stroke="#aaa" stroke-width="1"/></svg>
<div class="a" style="left:714px;top:327px;width:28px;height:1px;background:#3e3e3e;"></div>
<svg class="a" style="left:721px;top:331px" width="15" height="3"><path d="M0 1.500h15" stroke="#2a2a2a" stroke-width="2" stroke-dasharray="1.500 1.200"/></svg>
<svg class="a" style="left:719.0px;top:336.0px" width="18" height="18" viewBox="0 0 18 18"><circle cx="9" cy="9" r="6" fill="#c8c8c8"/><rect x="8" y="8" width="2.200" height="5" fill="#555"/><circle cx="9.100" cy="5.800" r="1.300" fill="#555"/></svg>
<svg class="a" style="left:719.0px;top:358.0px" width="18" height="18" viewBox="0 0 18 18"><path d="M4.500 2.500h6l3 3v10h-9z" fill="#6a6a6a" stroke="#c8c8c8" stroke-width="1.100"/><rect x="8" y="9" width="2" height="4.500" fill="#d8d8d8"/><circle cx="9" cy="7" r="1.100" fill="#d8d8d8"/></svg>
<svg class="a" style="left:719.0px;top:377.5px" width="18" height="18" viewBox="0 0 18 18"><rect x="4.500" y="5.500" width="10" height="9" fill="#999" stroke="#c8c8c8" stroke-width="1.200"/><circle cx="6.500" cy="6" r="3.200" fill="#777" stroke="#d0d0d0" stroke-width="1"/><rect x="8" y="9" width="5" height="4" fill="#555"/></svg>
<div class="a" style="left:714px;top:401px;width:28px;height:1px;background:#3e3e3e;"></div>
<svg class="a" style="left:721px;top:404px" width="15" height="3"><path d="M0 1.500h15" stroke="#2a2a2a" stroke-width="2" stroke-dasharray="1.500 1.200"/></svg>
<svg class="a" style="left:719.0px;top:410.0px" width="18" height="18" viewBox="0 0 18 18"><circle cx="9" cy="9" r="4" fill="none" stroke="#c8c8c8" stroke-width="1.300"/><path d="M9 2v14M2 9h14M4 4l10 10M14 4l-10 10" stroke="#c8c8c8" stroke-width="1.100"/><circle cx="9" cy="9" r="1.500" fill="#c8c8c8"/></svg>
<div class="a" style="left:714px;top:431px;width:28px;height:1px;background:#3e3e3e;"></div>
<svg class="a" style="left:721px;top:434px" width="15" height="3"><path d="M0 1.500h15" stroke="#2a2a2a" stroke-width="2" stroke-dasharray="1.500 1.200"/></svg>
<svg class="a" style="left:719.0px;top:440.0px" width="18" height="18" viewBox="0 0 18 18"><path d="M4 3.500l11 5.500-11 5.500z" fill="#c8c8c8"/></svg>
<svg class="a" style="left:719.0px;top:460.0px" width="18" height="18" viewBox="0 0 18 18"><rect x="2.500" y="6" width="7" height="6" rx="3" fill="none" stroke="#d0d0d0" stroke-width="1.600"/><rect x="8.500" y="6" width="7" height="6" rx="3" fill="none" stroke="#d0d0d0" stroke-width="1.600"/><path d="M6 9h6" stroke="#d0d0d0" stroke-width="1.600"/></svg>
<div class="a" style="left:744px;top:58px;width:216px;height:13px;background:#444444;"></div>
<div class="a" style="left:744px;top:58px;width:34px;height:13px;background:#5c5c5c;"></div>
<div class="a" style="left:779px;top:58px;width:49px;height:12px;background:#4e4e4e;"></div>
<div class="a" style="left:829px;top:58px;width:46px;height:12px;background:#4e4e4e;"></div>
<svg class="a" style="left:747px;top:60px" width="5" height="9"><path d="M0.500 3.500l2-2.500 2 2.500M0.500 5.500l2 2.500 2-2.500" fill="none" stroke="#ddd" stroke-width="1"/></svg>
<div class="t " style="left:753.7px;top:60px;font-size:8.5px;color:#f0f0f0;font-weight:bold;letter-spacing:-0.64px">Color</div>
<div class="t " style="left:784px;top:60px;font-size:8.5px;color:#c0c0c0;font-weight:bold;letter-spacing:-0.69px">Color Guide</div>
<div class="t " style="left:836.7px;top:60px;font-size:8.5px;color:#c0c0c0;font-weight:bold;letter-spacing:-0.78px">Swatches</div>
<svg class="a" style="left:945.500px;top:61.5px" width="11" height="7"><path d="M0 1h3.600l-1.800 2.400z" fill="#dcdcdc"/><path d="M4.500 0.800h6M4.500 3.200h6M4.500 5.600h6" stroke="#dcdcdc" stroke-width="1.100"/></svg>
<div class="a" style="left:744px;top:71px;width:216px;height:73px;background:#5c5c5c;"></div>
<div class="a" style="left:744px;top:144px;width:216px;height:2px;background:#3e3e3e;"></div>
<svg class="a" style="left:748px;top:77px" width="30" height="11"><rect x="0" y="0" width="10" height="10.500" fill="#f4f4f4"/><path d="M0.500 10L9.500 0.500" stroke="#d8242c" stroke-width="1.600"/><rect x="10" y="0" width="9.500" height="10.500" fill="#0a0a0a"/><rect x="19.500" y="0" width="9.500" height="10.500" fill="#f2f2f2"/></svg>
<div class="a" style="left:749px;top:96px;width:197px;height:43px;background:linear-gradient(90deg,#ea7f90 0%,#f0a878 7%,#e6e05c 17%,#a4d058 27%,#6cc488 38%,#78cce0 52%,#3f7fc4 62%,#4c54b0 70%,#9046a8 80%,#e01a84 91%,#e2202c 100%)"><div class="a" style="left:0;top:0;width:100%;height:100%;background:linear-gradient(180deg,rgba(255,255,255,.95) 0%,rgba(255,255,255,.6) 12%,rgba(255,255,255,0) 38%,rgba(0,0,0,0) 55%,rgba(0,0,0,.35) 78%,rgba(0,0,0,.9) 100%)"></div></div>
<svg class="a" style="left:946px;top:134px" width="8" height="8"><path d="M7 1v1M5 3v1M7 3v1M3 5v1M5 5v1M7 5v1" stroke="#777" stroke-width="1"/></svg>
<div class="a" style="left:744px;top:146px;width:216px;height:13px;background:#444444;"></div>
<div class="a" style="left:744px;top:146px;width:137px;height:13px;background:#5c5c5c;"></div>
<div class="t " style="left:750px;top:148px;font-size:9px;color:#c0c0c0;font-weight:bold;">Stroke</div>
<div class="t " style="left:786px;top:148px;font-size:9px;color:#c0c0c0;font-weight:bold;">Gradient</div>
<div class="t " style="left:823px;top:148px;font-size:8.5px;color:#d8d8d8;font-weight:bold;letter-spacing:-0.27px">Transparency</div>
<svg class="a" style="left:945.500px;top:149.5px" width="11" height="7"><path d="M0 1h3.600l-1.800 2.400z" fill="#dcdcdc"/><path d="M4.500 0.800h6M4.500 3.200h6M4.500 5.600h6" stroke="#dcdcdc" stroke-width="1.100"/></svg>
<div class="a" style="left:744px;top:159px;width:216px;height:24px;background:#5c5c5c;"></div>
<div class="a" style="left:744px;top:183px;width:216px;height:2px;background:#3e3e3e;"></div>
<div class="a" style="left:744px;top:185px;width:216px;height:13px;background:#444444;"></div>
<div class="a" style="left:744px;top:185px;width:129px;height:13px;background:#555555;"></div>
<div class="t " style="left:750px;top:187px;font-size:9px;color:#e8e8e8;font-weight:bold;">Layers</div>
<div class="t " style="left:832px;top:187px;font-size:8.5px;color:#b0b0b0;font-weight:bold;letter-spacing:-0.51px">Artboards</div>
<svg class="a" style="left:945.500px;top:188.5px" width="11" height="7"><path d="M0 1h3.600l-1.800 2.400z" fill="#dcdcdc"/><path d="M4.500 0.800h6M4.500 3.200h6M4.500 5.600h6" stroke="#dcdcdc" stroke-width="1.100"/></svg>
<div class="a" style="left:744px;top:198px;width:216px;height:340px;background:#5c5c5c;"></div>
<div class="a" style="left:747px;top:202px;width:208px;height:321px;background:#5e5e5e;border:1px solid #484848"></div>
<div class="a" style="left:748px;top:203px;width:206px;height:45px;background:#68717f;"></div>
<div class="a" style="left:748px;top:248px;width:206px;height:1px;background:#424242;"></div>
<div class="a" style="left:748px;top:294px;width:206px;height:1px;background:#424242;"></div>
<div class="a" style="left:748px;top:340px;width:206px;height:1px;background:#424242;"></div>
<div class="a" style="left:928px;top:203px;width:1px;height:137px;background:#454545;"></div>
<div class="a" style="left:764px;top:203px;width:1px;height:137px;background:#4a4a4a;"></div>
<div class="a" style="left:779px;top:203px;width:1px;height:137px;background:#4a4a4a;"></div>
<svg class="a" style="left:949px;top:203px" width="5" height="5"><path d="M1 0h4v4z" fill="#e0e0e0"/></svg>
<svg class="a" style="left:931px;top:221px" width="10" height="10"><circle cx="5" cy="5" r="3.200" fill="none" stroke="#dcdcdc" stroke-width="1"/></svg>
<svg class="a" style="left:931px;top:267px" width="10" height="10"><circle cx="5" cy="5" r="3.200" fill="none" stroke="#dcdcdc" stroke-width="1"/></svg>
<svg class="a" style="left:931px;top:312px" width="10" height="10"><circle cx="5" cy="5" r="3.200" fill="none" stroke="#dcdcdc" stroke-width="1"/></svg>
<div class="a" style="left:944.5px;top:223.5px;width:5px;height:5px;background:#d82858;border:1px solid #e8a8b4"></div>
<div class="t " style="left:843.5px;top:222px;font-size:8px;color:#f0f0f0;;letter-spacing:0.24px">Drawing</div>
<div class="t " style="left:849px;top:267px;font-size:8px;color:#e0e0e0;;letter-spacing:-0.15px">Image</div>
<div class="a" style="left:780px;top:295px;width:5px;height:45px;background:#7d48b4;"></div>
<svg class="a" style="left:749px;top:311px" width="13" height="10"><path d="M1 5q5.500-6 11 0q-5.500 6-11 0z" fill="none" stroke="#c8c8c8" stroke-width="1"/><circle cx="6.500" cy="4.600" r="1.900" fill="#c8c8c8"/></svg>
<svg class="a" style="left:788px;top:313px" width="6" height="9"><path d="M0.500 0.500v8l4.500-4z" fill="#e0e0e0"/></svg>
<div class="a" style="left:800px;top:296px;width:44px;height:43px;background:#ececec;border:1px solid #111"></div>
<div class="t " style="left:847px;top:313px;font-size:8px;color:#e8e8e8;;letter-spacing:-0.39px">Guides</div>
<div class="t " style="left:748px;top:527px;font-size:8px;color:#e0e0e0;;letter-spacing:-0.46px">3 Layers</div>
<svg class="a" style="left:850px;top:525px" width="95" height="13"><circle cx="9" cy="5" r="3.200" fill="none" stroke="#ddd" stroke-width="1.200"/><path d="M6.800 7.500l-3 3.500" stroke="#ddd" stroke-width="1.600"/><rect x="21.500" y="2.500" width="7" height="6" fill="#888" stroke="#ddd"/><rect x="25" y="5.500" width="5" height="5" fill="#666" stroke="#bbb" stroke-width=".8"/><path d="M39 2v4h3" fill="none" stroke="#ddd" stroke-width="1.200"/><rect x="43" y="3" width="7" height="6" fill="#ddd"/><path d="M43 9v2.500h3" stroke="#ddd" fill="none"/><path d="M59 3h9v8h-5l-4-3z" fill="#ddd"/><path d="M59 8h4v3" fill="#777"/><path d="M79.500 4.500h7l-.8 7.500h-5.400zM78 3.500h10M81.500 3.500v-1.500h3v1.500" fill="none" stroke="#ddd" stroke-width="1.100"/><path d="M82 6v4.500M84.500 6v4.500" stroke="#ddd" stroke-width=".8"/></svg>
<div class="t " style="left:769.2px;top:497.5px;font-size:31.5px;color:#444444;font-family:'DejaVu Sans','Liberation Sans',sans-serif;font-weight:bold;opacity:.9;letter-spacing:-1.31px">lynda</div>
<div class="t " style="left:861.5px;top:497.5px;font-size:31.5px;color:#444444;font-family:'DejaVu Sans','Liberation Sans',sans-serif;font-weight:200;-webkit-text-stroke:.55px #444;opacity:.9;letter-spacing:1.68px">.com</div>
<div class="a" style="left:581px;top:112px;width:280px;height:196px;border-radius:5px;background:linear-gradient(180deg,#cfcfcf 0,#b4b4b4 20px,#a8a8a8 60px,#b0b0b0 100%);box-shadow:0 0 0 1px #5a5a5a,0 2px 5px rgba(0,0,0,.45)"><div class="a" style="left:0;top:0;width:100%;height:21px;border-radius:5px 5px 0 0;background:linear-gradient(100deg,#b6b6b6 0%,#d4d4d4 45%,#bcbcbc 100%)"></div><div class="t" style="left:5.500px;top:5.500px;font-size:9.500px;color:#1c1c1c;letter-spacing:-0.3px">Rotate</div><div class="a" style="left:4px;top:20px;width:272px;height:172px;background:#5d5d5d;border:1px solid #d4d4d4;box-shadow:inset 0 0 0 1px #484848"></div></div>
<div class="a" style="left:598px;top:156px;width:246px;height:69px;background:transparent;border:1px solid #4a4a4a;box-shadow:inset 0 0 0 1px #666"></div>
<div class="a" style="left:603px;top:150px;width:33px;height:12px;background:#5d5d5d;"></div>
<div class="t " style="left:606px;top:151px;font-size:9.5px;color:#ececec;;letter-spacing:-0.33px">Rotate</div>
<div class="t " style="left:614.5px;top:177px;font-size:9.5px;color:#ececec;;letter-spacing:-0.08px"><u>A</u>ngle:</div>
<svg class="a" style="left:643px;top:168px" width="28" height="28"><circle cx="14" cy="14.300" r="12.300" fill="#6a6a6a" stroke="#b48a44" stroke-width="1.100"/><path d="M14 14V4" stroke="#333" stroke-width="1.200"/></svg>
<div class="a" style="left:674px;top:175px;width:45px;height:15px;background:#a6a6a6;border:1px solid #b8965e;box-shadow:inset 0 0 0 1px #747474"><div class="a" style="left:3px;top:2px;width:17px;height:10px;background:#4a84dc"></div><div class="t" style="left:4px;top:2.500px;font-size:9.500px;color:#fff">90°</div></div>
<div class="t " style="left:606px;top:204px;font-size:9.5px;color:#ececec;;letter-spacing:0.01px">Options:</div>
<div class="a" style="left:644px;top:204px;width:9px;height:9px;background:#5a5a5a;border:1px solid #707070"></div>
<svg class="a" style="left:644px;top:202px" width="11" height="11"><path d="M2 6l2.500 3 4.500-7" fill="none" stroke="#8a8a8a" stroke-width="1.400"/></svg>
<div class="t " style="left:656.4px;top:204px;font-size:9.5px;color:#8c8c8c;;letter-spacing:0.01px">Transform <u>O</u>bjects</div>
<div class="a" style="left:744px;top:204px;width:9px;height:9px;background:#5a5a5a;border:1px solid #707070"></div>
<div class="t " style="left:756.7px;top:204px;font-size:9.5px;color:#8c8c8c;;letter-spacing:-0.08px">Transform Pa<u>t</u>terns</div>
<div class="a" style="left:599px;top:233px;width:9px;height:9px;background:#5a5a5a;border:1px solid #8a8a8a"></div>
<svg class="a" style="left:599px;top:231px" width="11" height="11"><path d="M2 6l2.500 3 4.500-7" fill="none" stroke="#f0f0f0" stroke-width="1.400"/></svg>
<div class="t " style="left:610.8px;top:233px;font-size:9.5px;color:#ececec;;letter-spacing:-0.17px"><u>P</u>review</div>
<div class="btn" style="left:598px;top:262px;width:68px"></div><div class="btn" style="left:704px;top:262px;width:68px;border-color:#2c2c2c"></div><div class="btn" style="left:777px;top:262px;width:67px"></div>
<div class="t " style="left:621.8px;top:266px;font-size:9.2px;color:#f0f0f0;;letter-spacing:-0.32px"><u>C</u>opy</div>
<div class="t " style="left:731.8px;top:266px;font-size:9.2px;color:#f0f0f0;;letter-spacing:-0.29px">OK</div>
<div class="t " style="left:797px;top:266px;font-size:9.2px;color:#f0f0f0;;letter-spacing:-0.13px">Cancel</div>
<svg class="a" style="left:705px;top:194px" width="13" height="19"><path d="M1.500 1v13.500l3.200-3 2.300 5.300 2.200-1-2.300-5.100h4.400z" fill="#fff" stroke="#111" stroke-width="1"/></svg>
</body></html>
